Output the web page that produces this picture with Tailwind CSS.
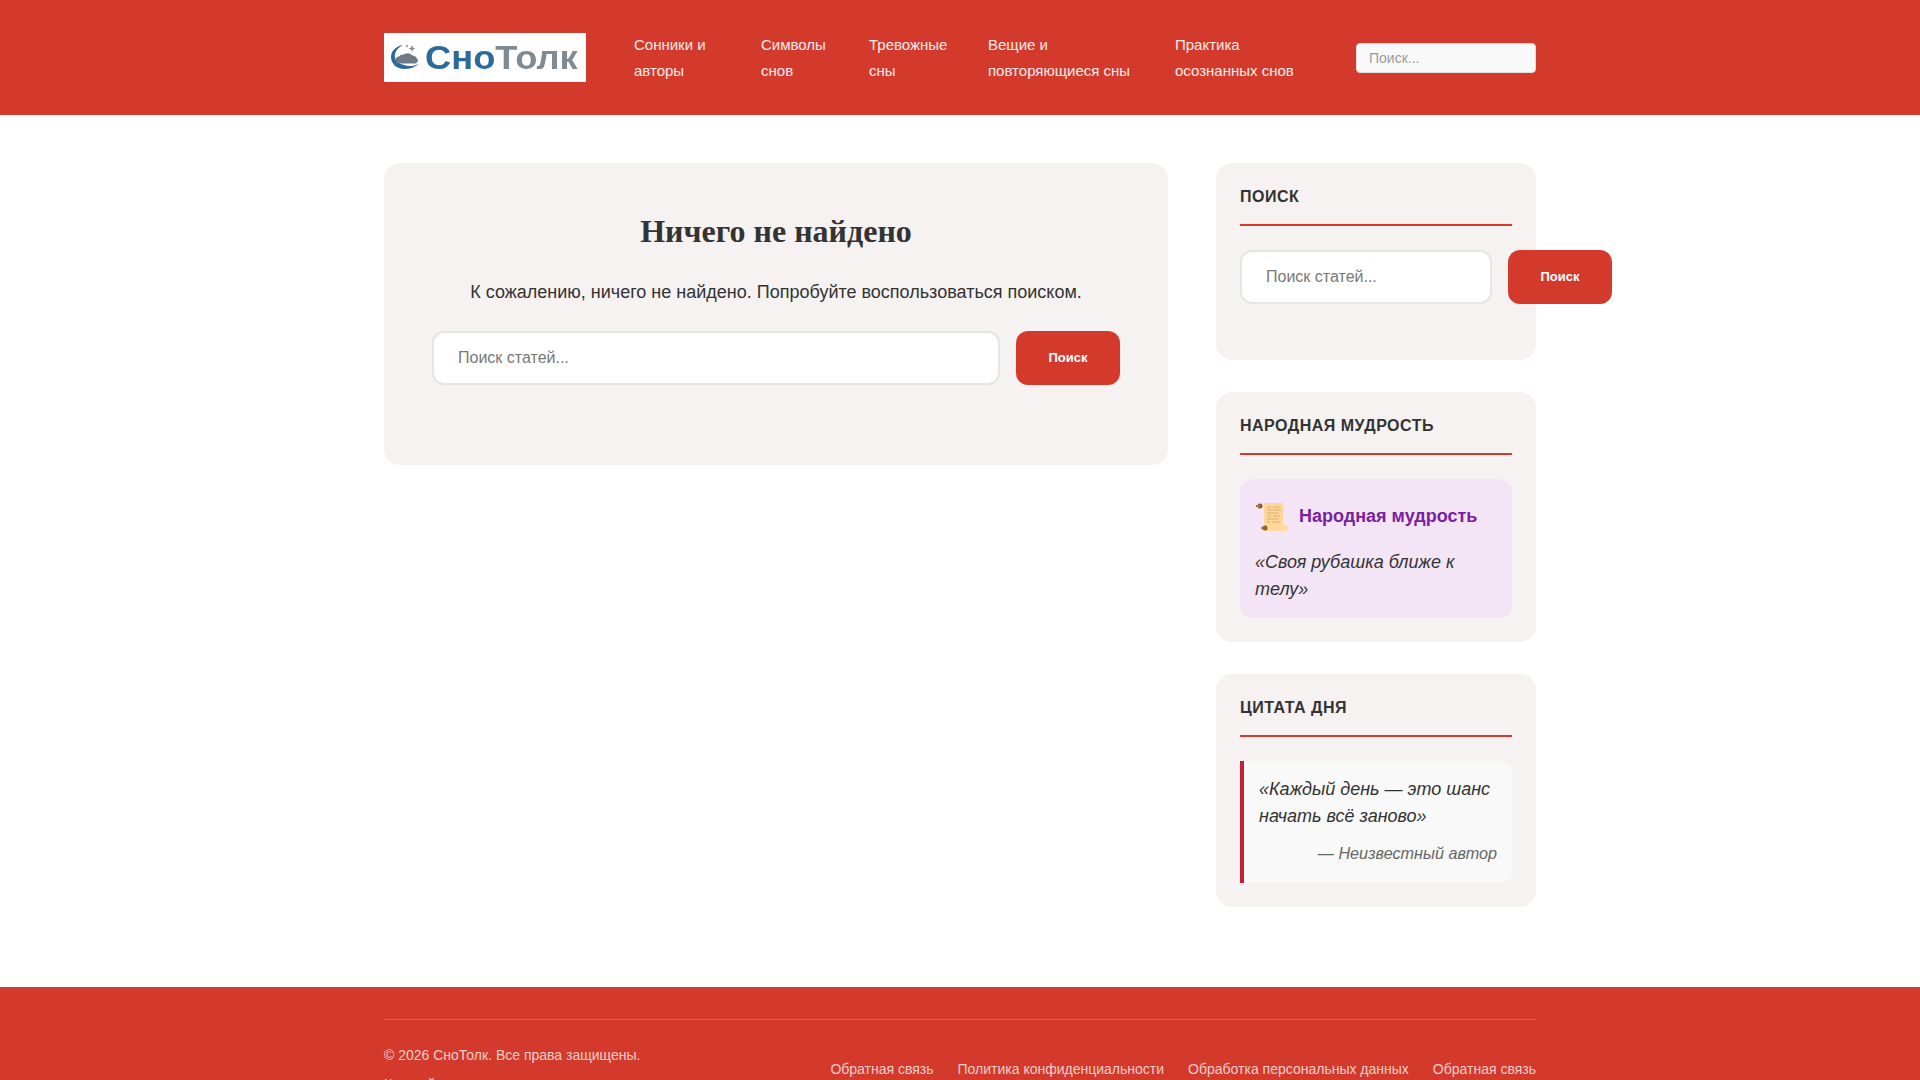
<!DOCTYPE html>
<html lang="ru">
<head>
    <meta charset="UTF-8">
    <meta name="viewport" content="width=device-width, initial-scale=1.0">
    <title>Ничего не найдено - СноТолк</title>
    <script src="https://cdn.jsdelivr.net/npm/@tailwindcss/browser@4"></script>
</head>
<body class="bg-white font-['Liberation_Sans',sans-serif] text-[16px] leading-[1.7] text-[#333] antialiased">
    <header class="bg-[#d33a2c] h-[115px]">
        <div class="w-[1152px] mx-auto h-full flex items-center">
            <a href="#" class="w-[202px] h-[49px] bg-white flex items-center pl-[7px] pb-[2px] shrink-0">
                <svg width="28" height="26" viewBox="0 0 28 26" class="shrink-0 blur-[0.3px]">
                    <path d="M12 1C5 2 0 7 0 13c0 7 6 12 13 12 6 0 11-2 15-5-5 2-10 3-15 1C6 19 3 15 4 10c1-4 4-7 8-9z" fill="#2c6a9a"/>
                    <path d="M8.500 19.500a3.500 3.500 0 0 1-.5-7 5 5 0 0 1 5-2 7 7 0 0 1 8.500 1 4 4 0 0 1 4 2.500 3 3 0 0 1-1 5.500z" fill="#6f7b84"/>
                    <path d="M21 1l.9 2.600 2.600.9-2.600.9-.9 2.600-.9-2.600-2.600-.9 2.600-.9z" fill="#7f8a93"/>
                    <path d="M16 0l.5 1.500 1.500.5-1.500.5-.5 1.500-.5-1.500-1.500-.5 1.500-.5z" fill="#7f8a93"/>
                </svg>
                <span class="ml-[6px] mt-[2px] text-[33px] font-bold leading-none text-[#2c6a9a] origin-left scale-x-[1.1] blur-[0.3px]">Сно<span class="text-[#7f8a93]">Толк</span></span>
            </a>
            <nav class="ml-[48px] flex text-[15px] leading-[25.840px] text-white/90">
                <a href="#" class="w-[127px]">Сонники и<br>авторы</a>
                <a href="#" class="w-[108px]">Символы<br>снов</a>
                <a href="#" class="w-[119px]">Тревожные<br>сны</a>
                <a href="#" class="w-[187px]">Вещие и<br>повторяющиеся сны</a>
                <a href="#" class="w-[180px]">Практика<br>осознанных снов</a>
            </nav>
            <input type="text" placeholder="Поиск..." class="ml-auto w-[180px] h-[30px] px-[12px] rounded-[4px] border border-[#ddd] bg-[#f9f9f9] text-[14px] placeholder:text-[#999] outline-none">
        </div>
    </header>

    <main class="w-[1152px] mx-auto mt-[48px] flex gap-[48px] items-start">
        <section class="w-[784px] h-[302px] bg-[#f5f2f1] rounded-[16px] p-[48px] text-center">
            <h1 class="font-['Liberation_Serif',serif] text-[32px] font-bold leading-[1.3] text-[#333]">Ничего не найдено</h1>
            <p class="mt-[24px] text-[18px] leading-[1.7]">К сожалению, ничего не найдено. Попробуйте воспользоваться поиском.</p>
            <form class="mt-[24px] flex gap-[16px]">
                <input type="text" placeholder="Поиск статей..." class="flex-1 h-[54px] px-[24px] rounded-[12px] border-2 border-[#e5e5e5] bg-white text-[16px] placeholder:text-[#777] outline-none">
                <button type="button" class="w-[104px] h-[54px] rounded-[12px] bg-[#d33a2c] text-white text-[13px] font-bold">Поиск</button>
            </form>
        </section>

        <aside class="w-[320px] flex flex-col gap-[32px]">
            <div class="h-[197px] bg-[#f5f2f1] rounded-[16px] px-[24px] pt-[20px]">
                <h3 class="text-[16px] font-bold uppercase tracking-[0.5px] leading-[27px] pb-[14px] border-b-2 border-[#d33a2c]">Поиск</h3>
                <form class="mt-[24px] flex gap-[16px] w-[372px]">
                    <input type="text" placeholder="Поиск статей..." class="w-[252px] h-[54px] px-[24px] rounded-[12px] border-2 border-[#e5e5e5] bg-white text-[16px] placeholder:text-[#777] outline-none">
                    <button type="button" class="w-[104px] h-[54px] rounded-[12px] bg-[#d33a2c] text-white text-[13px] font-bold">Поиск</button>
                </form>
            </div>

            <div class="h-[250px] bg-[#f5f2f1] rounded-[16px] px-[24px] pt-[20px]">
                <h3 class="text-[16px] font-bold uppercase tracking-[0.5px] leading-[27px] pb-[14px] border-b-2 border-[#d33a2c]">Народная мудрость</h3>
                <div class="mt-[24px] h-[139px] rounded-[12px] bg-[#f3e5f5] px-[15px] pt-[15px]">
                    <div class="flex items-center gap-[10px] text-[#7b1fa2] text-[18px] font-bold h-[44px]">
                        <svg width="34" height="32" viewBox="0 0 34 32" class="shrink-0 blur-[0.3px]">
                            <rect x="9" y="3" width="19" height="23" rx="1" fill="#ffd699"/>
                            <rect x="8" y="25" width="25" height="6" rx="3" fill="#ffd9a0"/>
                            <circle cx="5" cy="6" r="2.500" fill="#8b5a2b"/>
                            <rect x="1" y="5" width="4" height="2" fill="#a9713c"/>
                            <circle cx="10" cy="28" r="2.500" fill="#8b5a2b"/>
                            <rect x="6" y="27" width="4" height="2" fill="#a9713c"/>
                            <path d="M12 7h4m2 0h7M12 10h14M12 13h11M12 16h4m2 0h7M12 19h12M12 22h3m2 0h8" stroke="#d8ae76" stroke-width="1" fill="none"/>
                        </svg>
                        <span>Народная мудрость</span>
                    </div>
                    <p class="mt-[11px] text-[18px] leading-[27px] italic">«Своя рубашка ближе к<br>телу»</p>
                </div>
            </div>

            <div class="h-[233px] bg-[#f5f2f1] rounded-[16px] px-[24px] pt-[20px]">
                <h3 class="text-[16px] font-bold uppercase tracking-[0.5px] leading-[27px] pb-[14px] border-b-2 border-[#d33a2c]">Цитата дня</h3>
                <blockquote class="mt-[24px] h-[122px] rounded-r-[12px] border-l-4 border-[#c41e3a] bg-[#f9f9f9] pl-[15px] pr-[15px] pt-[15px]">
                    <p class="text-[18px] leading-[27px] italic">«Каждый день — это шанс<br>начать всё заново»</p>
                    <p class="mt-[10px] text-right text-[16.200px] italic text-[#666]">— Неизвестный автор</p>
                </blockquote>
            </div>
        </aside>
    </main>

    <footer class="mt-[80px] bg-[#d33a2c] text-white/75 text-[14px] pt-[32px] pb-[32px]">
        <div class="w-[1152px] mx-auto border-t border-white/20 pt-[24px] flex justify-between items-end">
            <div>
                <p>© 2026 СноТолк. Все права защищены.</p>
                <p class="mt-[5px]">Каждый сон имеет значение.</p>
            </div>
            <div class="flex gap-[24px] mb-[15px]">
                <a href="#">Обратная связь</a>
                <a href="#">Политика конфиденциальности</a>
                <a href="#">Обработка персональных данных</a>
                <a href="#">Обратная связь</a>
            </div>
        </div>
    </footer>
</body>
</html>
